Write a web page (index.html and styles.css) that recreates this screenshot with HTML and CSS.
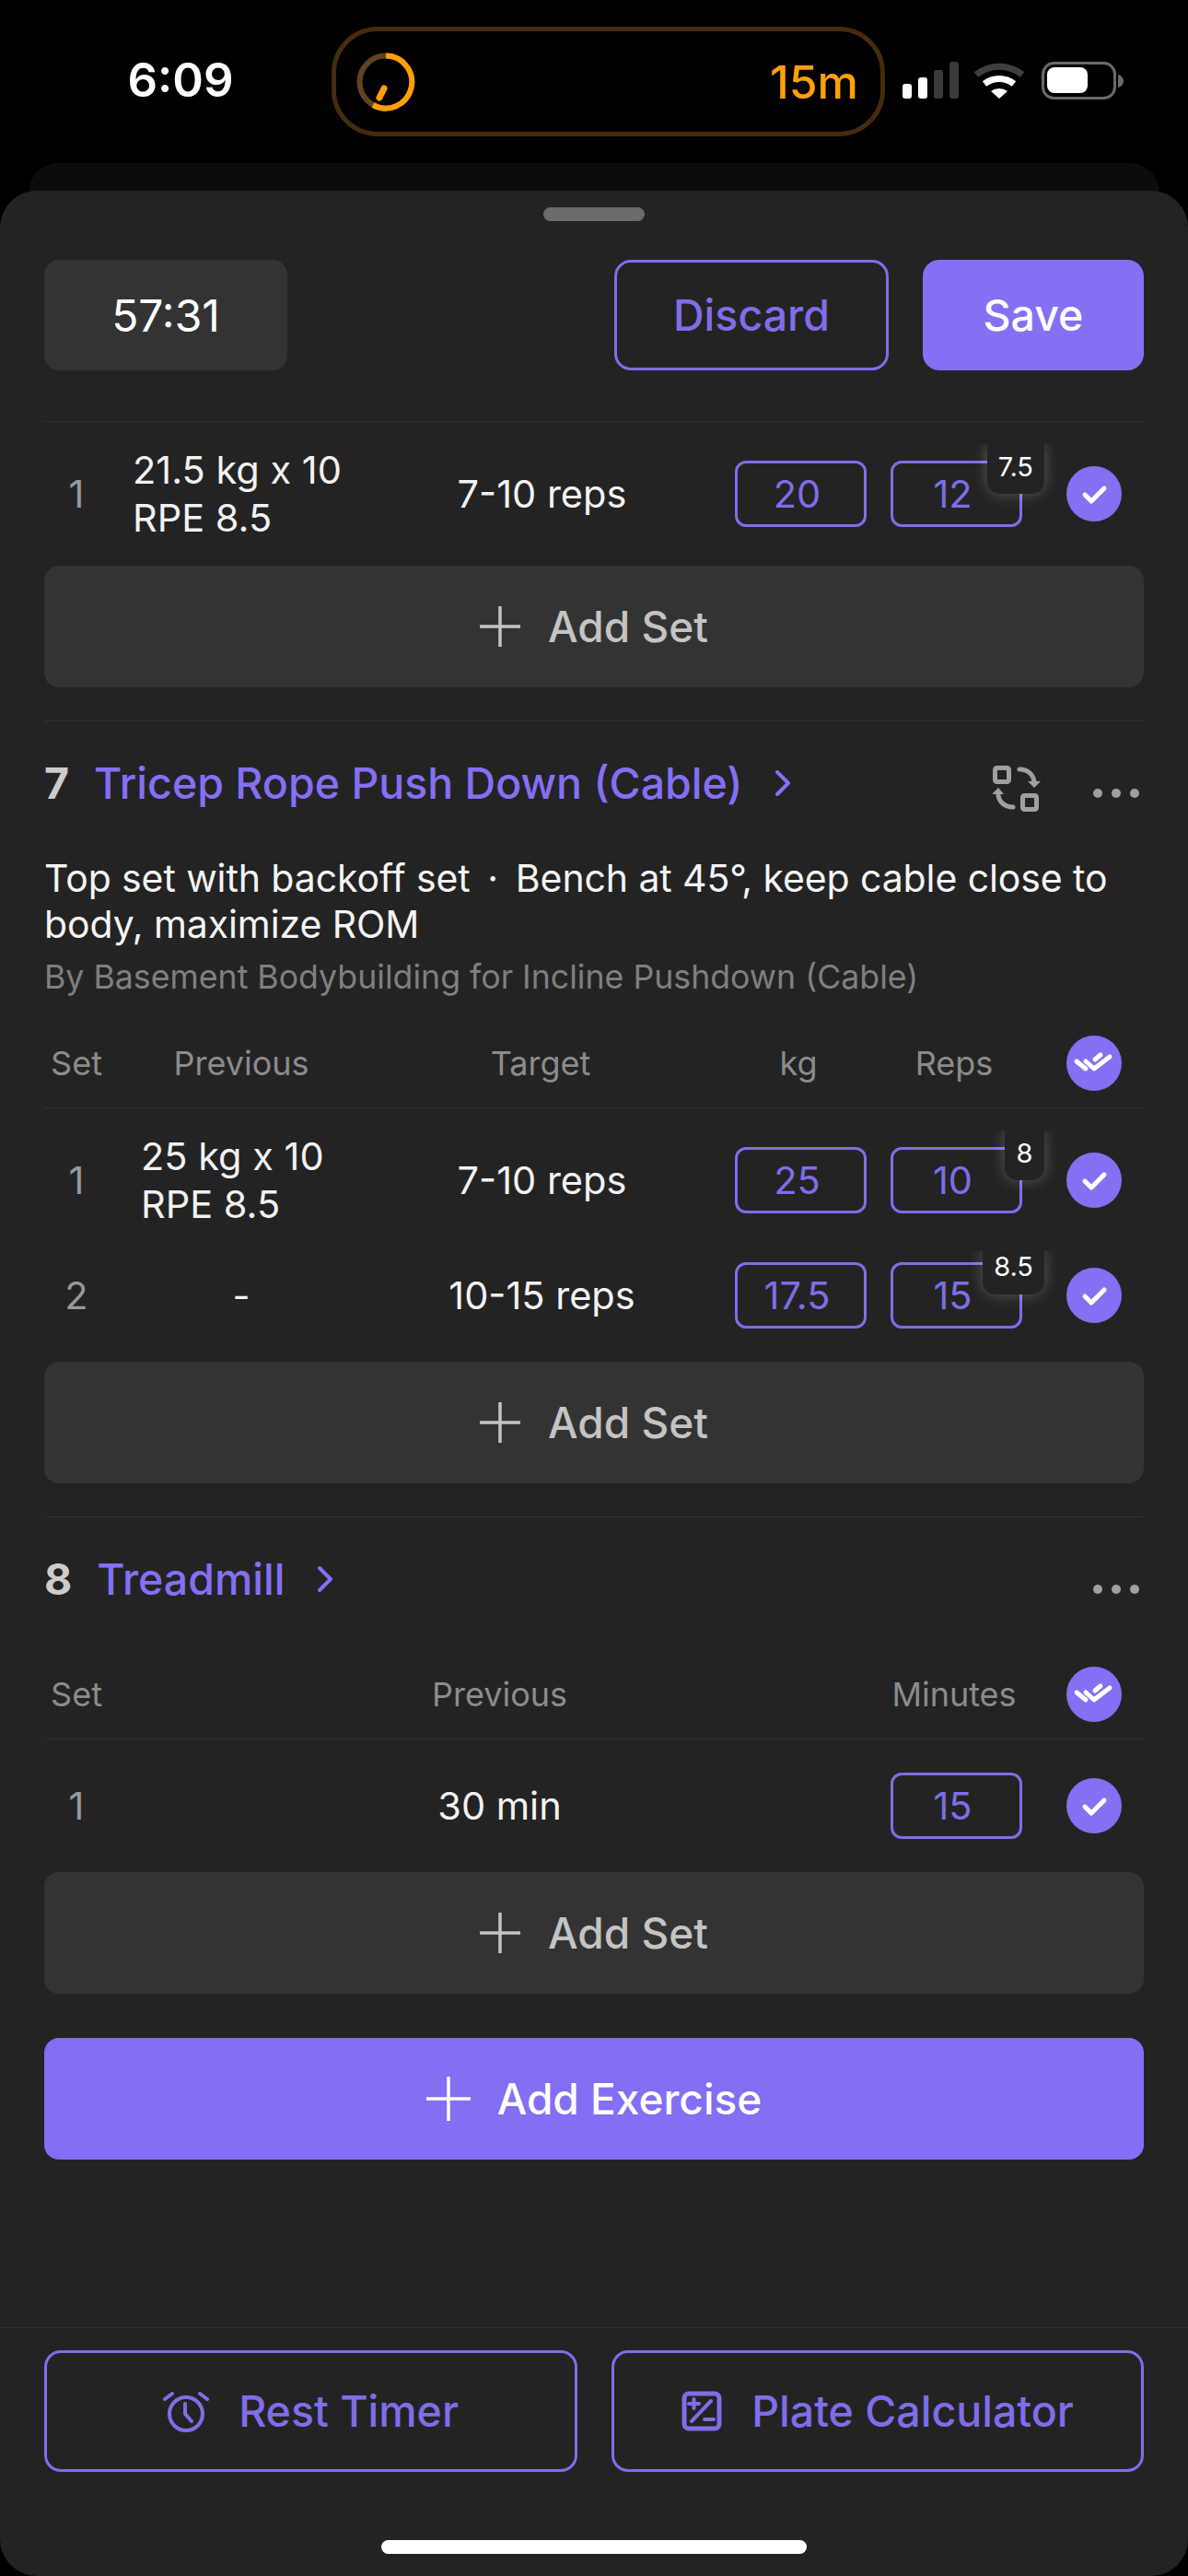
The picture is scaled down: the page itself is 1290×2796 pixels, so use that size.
FILE: index.html
```html
<!DOCTYPE html>
<html lang="en">
<head>
  <meta charset="UTF-8">
  <title>Workout</title>
  <link rel="stylesheet" href="styles.css">
</head>
<body>

  <div class="status">
    <div class="time">6:09</div>
    <div class="island">
      <svg class="ring" width="66" height="66" viewBox="0 0 66 66" fill="none">
        <circle cx="33" cy="33" r="28.5" stroke="#5f4320" stroke-width="6"/>
        <path d="M33 4.500A28.500 28.500 0 1 1 19 58" stroke="#ffa00a" stroke-width="6"/>
        <path d="M26 50l5-10" stroke="#ffa00a" stroke-width="7" stroke-linecap="round"/>
      </svg>
      <span class="island-text">15m</span>
    </div>
    <svg class="status-icons" width="240" height="42" viewBox="0 0 240 42" fill="none">
      <rect x="0" y="24" width="10" height="16" rx="3" fill="#fff"/>
      <rect x="17" y="17" width="10" height="23" rx="3" fill="#fff"/>
      <rect x="34" y="9" width="10" height="31" rx="3" fill="#3a3a3a"/>
      <rect x="51" y="0" width="10" height="40" rx="3" fill="#3a3a3a"/>
      <path d="M80 14a40 40 0 0 1 50 0" stroke="#3f3f3f" stroke-width="7"/>
      <path d="M89 24a26 26 0 0 1 32 0" stroke="#fff" stroke-width="7"/>
      <path d="M96 32a15 15 0 0 1 18 0L105 40z" fill="#fff"/>
      <rect x="152.500" y="1.500" width="78" height="38" rx="12" stroke="#6a6a6a" stroke-width="3"/>
      <rect x="157" y="6" width="44" height="28" rx="8" fill="#fff"/>
      <path d="M234 14c4 1 6 4 6 7s-2 6-6 7z" fill="#6a6a6a"/>
    </svg>
  </div>

  <div class="back-card"></div>

  <div class="sheet">
    <div class="handle"></div>

    <div class="top-row">
      <div class="timer">57:31</div>
      <button class="btn-outline discard">Discard</button>
      <button class="btn-solid save">Save</button>
    </div>

    <div class="sets first">
      <div class="set-row">
        <div class="num">1</div>
        <div class="prev">21.5 kg x 10<br>RPE 8.5</div>
        <div class="target">7-10 reps</div>
        <div class="field">20</div>
        <div class="field">12<span class="rpe">7.5</span></div>
        <div class="check"><svg width="60" height="60" viewBox="0 0 60 60" fill="none"><path d="M20 31l7 7 14-14" stroke="#fff" stroke-width="5" stroke-linecap="round" stroke-linejoin="round"/></svg></div>
      </div>
    </div>
    <button class="add-set"><svg width="44" height="44" viewBox="0 0 44 44" fill="none"><path d="M22 0v44M0 22h44" stroke="#c4c4c4" stroke-width="3.500"/></svg>Add Set</button>

    <div class="exercise">
      <div class="ex-title">
        <span class="ex-num">7</span>
        <span class="ex-name">Tricep Rope Push Down (Cable)</span>
        <svg class="chevron" width="22" height="30" viewBox="0 0 22 30" fill="none"><path d="M5 3l12 12L5 27" stroke="#8470f5" stroke-width="4" stroke-linecap="round" stroke-linejoin="round"/></svg>
        <svg class="swap" width="52" height="50" viewBox="0 0 52 50" fill="none">
          <rect x="2.500" y="2.500" width="15" height="15" rx="2" stroke="#a0a0a0" stroke-width="5"/>
          <rect x="32.500" y="32.500" width="15" height="15" rx="2" stroke="#a0a0a0" stroke-width="5"/>
          <path d="M29 4c10 0 16 7 16 15" stroke="#a0a0a0" stroke-width="5" stroke-linecap="round"/>
          <path d="M38 17h14l-7 7z" fill="#a0a0a0"/>
          <path d="M22 45c-10 0-16-7-16-14" stroke="#a0a0a0" stroke-width="5" stroke-linecap="round"/>
          <path d="M-1 31h13l-6-7z" fill="#a0a0a0"/>
        </svg>
        <svg class="dots" width="50" height="10" viewBox="0 0 50 10"><circle cx="5" cy="5" r="5" fill="#a0a0a0"/><circle cx="25" cy="5" r="5" fill="#a0a0a0"/><circle cx="45" cy="5" r="5" fill="#a0a0a0"/></svg>
      </div>
      <p class="notes">Top set with backoff set &#8201;·&#8201; Bench at 45°, keep cable close to body, maximize ROM</p>
      <p class="credit">By Basement Bodybuilding for Incline Pushdown (Cable)</p>

      <div class="set-head">
        <div class="num">Set</div>
        <div class="head-prev">Previous</div>
        <div class="head-target">Target</div>
        <div class="head-col">kg</div>
        <div class="head-col">Reps</div>
        <div class="check"><svg width="60" height="60" viewBox="0 0 60 60" fill="none"><path d="M11 28l10 8M21 28l9 8 17-13M31 26l6-5" stroke="#fff" stroke-width="5" stroke-linecap="round" stroke-linejoin="round"/></svg></div>
      </div>
      <div class="sets">
        <div class="set-row">
          <div class="num">1</div>
          <div class="prev prev-short">25 kg x 10<br>RPE 8.5</div>
          <div class="target">7-10 reps</div>
          <div class="field">25</div>
          <div class="field">10<span class="rpe">8</span></div>
          <div class="check"><svg width="60" height="60" viewBox="0 0 60 60" fill="none"><path d="M20 31l7 7 14-14" stroke="#fff" stroke-width="5" stroke-linecap="round" stroke-linejoin="round"/></svg></div>
        </div>
        <div class="set-row">
          <div class="num">2</div>
          <div class="prev prev-empty">-</div>
          <div class="target">10-15 reps</div>
          <div class="field">17.5</div>
          <div class="field">15<span class="rpe rpe-short">8.5</span></div>
          <div class="check"><svg width="60" height="60" viewBox="0 0 60 60" fill="none"><path d="M20 31l7 7 14-14" stroke="#fff" stroke-width="5" stroke-linecap="round" stroke-linejoin="round"/></svg></div>
        </div>
      </div>
      <button class="add-set"><svg width="44" height="44" viewBox="0 0 44 44" fill="none"><path d="M22 0v44M0 22h44" stroke="#c4c4c4" stroke-width="3.500"/></svg>Add Set</button>
    </div>

    <div class="exercise">
      <div class="ex-title">
        <span class="ex-num">8</span>
        <span class="ex-name">Treadmill</span>
        <svg class="chevron" width="22" height="30" viewBox="0 0 22 30" fill="none"><path d="M5 3l12 12L5 27" stroke="#8470f5" stroke-width="4" stroke-linecap="round" stroke-linejoin="round"/></svg>
        <svg class="dots push" width="50" height="10" viewBox="0 0 50 10"><circle cx="5" cy="5" r="5" fill="#a0a0a0"/><circle cx="25" cy="5" r="5" fill="#a0a0a0"/><circle cx="45" cy="5" r="5" fill="#a0a0a0"/></svg>
      </div>

      <div class="set-head cardio">
        <div class="num">Set</div>
        <div class="head-prev">Previous</div>
        <div class="head-col">Minutes</div>
        <div class="check"><svg width="60" height="60" viewBox="0 0 60 60" fill="none"><path d="M11 28l10 8M21 28l9 8 17-13M31 26l6-5" stroke="#fff" stroke-width="5" stroke-linecap="round" stroke-linejoin="round"/></svg></div>
      </div>
      <div class="sets">
        <div class="set-row cardio">
          <div class="num">1</div>
          <div class="prev prev-empty">30 min</div>
          <div class="field">15</div>
          <div class="check"><svg width="60" height="60" viewBox="0 0 60 60" fill="none"><path d="M20 31l7 7 14-14" stroke="#fff" stroke-width="5" stroke-linecap="round" stroke-linejoin="round"/></svg></div>
        </div>
      </div>
      <button class="add-set"><svg width="44" height="44" viewBox="0 0 44 44" fill="none"><path d="M22 0v44M0 22h44" stroke="#c4c4c4" stroke-width="3.500"/></svg>Add Set</button>
    </div>

    <button class="add-exercise"><svg width="48" height="48" viewBox="0 0 48 48" fill="none"><path d="M24 0v48M0 24h48" stroke="#fff" stroke-width="3.500"/></svg>Add Exercise</button>

    <div class="footer">
      <button class="btn-outline tool">
        <svg width="50" height="46" viewBox="0 0 50 46" fill="none">
          <circle cx="25" cy="26" r="18" stroke="#7f6ee8" stroke-width="4"/>
          <path d="M24 15v11l7 8" stroke="#7f6ee8" stroke-width="4" stroke-linecap="round" stroke-linejoin="round"/>
          <path d="M2 10l8-6M40 4l8 6" stroke="#7f6ee8" stroke-width="4" stroke-linecap="round"/>
        </svg>
        Rest Timer
      </button>
      <button class="btn-outline tool">
        <svg width="44" height="44" viewBox="0 0 44 44" fill="none">
          <rect x="3" y="3" width="38" height="38" rx="5" stroke="#7f6ee8" stroke-width="5"/>
          <path d="M11 33L32 11" stroke="#7f6ee8" stroke-width="4" stroke-linecap="round"/>
          <path d="M8 14h11M13.500 9v10M25 31h10" stroke="#7f6ee8" stroke-width="4" stroke-linecap="round"/>
        </svg>
        Plate Calculator
      </button>
    </div>

    <div class="home-bar"></div>
  </div>

</body>
</html>
```

FILE: styles.css
```css
* {
  box-sizing: border-box;
}
body {
  margin: 0;
  width: 1290px;
  height: 2796px;
  overflow: hidden;
  background: #000;
  font-family: Inter, "Liberation Sans", sans-serif;
  color: #f2f2f2;
}
button {
  font-family: inherit;
  cursor: pointer;
}
p {
  margin: 0;
}

/* status bar */
.status {
  display: flex;
  align-items: flex-start;
  height: 177px;
  padding-top: 29px;
}
.time {
  width: 360px;
  padding-top: 28px;
  padding-left: 32px;
  text-align: center;
  font-size: 51px;
  line-height: 60px;
  font-weight: 600;
  color: #fff;
}
.island {
  display: flex;
  align-items: center;
  justify-content: space-between;
  width: 601px;
  height: 119px;
  padding: 0 24px 0 21px;
  border: 5px solid #462c0c;
  border-radius: 50px;
}
.island-text {
  font-size: 50px;
  font-weight: 500;
  color: #ffa00a;
}
.status-icons {
  margin: 38px 0 0 19px;
}
.back-card {
  height: 60px;
  margin: 0 31px -30px;
  background: #0c0c0c;
  border-radius: 32px 32px 0 0;
}

/* sheet */
.sheet {
  position: relative;
  display: flex;
  flex-direction: column;
  height: 2589px;
  padding: 18px 48px 24px;
  background: #232323;
  border-radius: 40px;
}
.handle {
  align-self: center;
  width: 110px;
  height: 15px;
  background: #6b6b6b;
  border-radius: 8px;
}
.top-row {
  display: flex;
  align-items: stretch;
  height: 120px;
  margin-top: 42px;
  gap: 37px;
}
.timer {
  display: flex;
  align-items: center;
  justify-content: center;
  width: 264px;
  margin-right: auto;
  background: #333;
  border-radius: 16px;
  font-size: 48px;
  color: #fff;
}
.btn-outline {
  background: none;
  border: 3px solid #7f6ee8;
  border-radius: 18px;
  color: #7f6ee8;
  font-weight: 500;
}
.btn-solid {
  background: #8570f4;
  border: none;
  border-radius: 18px;
  color: #fff;
  font-weight: 500;
}
.discard {
  width: 298px;
  font-size: 46.5px;
}
.save {
  width: 240px;
  font-size: 46.5px;
}

/* set rows */
.sets {
  display: flex;
  flex-direction: column;
  gap: 27px;
  padding: 26px 0;
}
.sets.first {
  margin-top: 55px;
  border-top: 1px solid #303030;
}
.set-row,
.set-head {
  display: grid;
  grid-template-columns: 70px 232px 370px 143px 143px 82px;
  column-gap: 26px;
  align-items: center;
}
.set-row {
  min-height: 92px;
  font-size: 41.5px;
}
.set-row.cardio,
.set-head.cardio {
  grid-template-columns: 70px 797px 143px 82px;
}
.num {
  text-align: center;
  color: #999;
}
.prev {
  line-height: 52px;
}
.prev-short {
  padding-left: 9px;
}
.prev-empty {
  padding-left: 4px;
  text-align: center;
}
.cardio .prev-empty,
.cardio .head-prev {
  padding-left: 0;
}
.target {
  padding-left: 3px;
  text-align: center;
}
.field {
  position: relative;
  display: flex;
  align-items: center;
  justify-content: center;
  height: 72px;
  padding-right: 8px;
  border: 3px solid #7f6ee8;
  border-radius: 12px;
  color: #7f6ee8;
}
.rpe {
  position: absolute;
  top: -21px;
  right: -27px;
  display: flex;
  align-items: center;
  justify-content: center;
  min-width: 43px;
  height: 54px;
  padding: 0 12px 6px;
  background: #232323;
  border-radius: 0 0 14px 14px;
  box-shadow: 0 0 16px rgba(255, 255, 255, .25);
  clip-path: inset(0 -30px -30px -30px);
  font-size: 29px;
  color: #fff;
}
.rpe-short {
  top: -16px;
  height: 48px;
  padding-bottom: 14px;
}
.check {
  justify-self: end;
  width: 60px;
  height: 60px;
  background: #8570f4;
  border-radius: 50%;
}
.check svg {
  display: block;
}
.add-set,
.add-exercise {
  display: flex;
  align-items: center;
  justify-content: center;
  flex-shrink: 0;
  width: 100%;
  height: 132px;
  border: none;
  border-radius: 16px;
  font-size: 46px;
  font-weight: 500;
}
.add-set {
  gap: 30px;
  background: #333;
  color: #c4c4c4;
}
.add-exercise {
  gap: 29px;
  margin-top: 48px;
  background: #846ef3;
  color: #fff;
}

/* exercise block */
.exercise {
  margin-top: 36px;
  padding-top: 37px;
  border-top: 1px solid #303030;
}
.ex-title {
  display: flex;
  align-items: center;
  height: 60px;
  font-size: 46.5px;
  font-weight: 500;
}
.ex-num {
  margin-right: 27px;
  font-weight: 700;
  color: #ccc;
}
.ex-name {
  color: #8470f5;
}
.chevron {
  margin-left: 33px;
}
.swap {
  margin-left: auto;
  margin-top: 12px;
}
.dots {
  margin-left: 57px;
  margin-right: 5px;
  margin-top: 22px;
}
.dots.push {
  margin-left: auto;
}
.notes {
  margin-top: 48px;
  font-size: 41px;
  letter-spacing: -.1px;
  line-height: 50px;
  color: #f4f4f4;
}
.credit {
  margin-top: 10px;
  font-size: 35.7px;
  line-height: 44px;
  color: #808080;
}
.set-head {
  margin-top: 42px;
  padding-bottom: 18px;
  border-bottom: 1px solid #303030;
  font-size: 36px;
  color: #8c8c8c;
}
.set-head.cardio {
  margin-top: 65px;
}
.set-head .num {
  color: #8c8c8c;
}
.head-prev {
  padding-left: 4px;
  text-align: center;
}
.head-target {
  text-align: center;
}
.head-col {
  padding-right: 5px;
  text-align: center;
}

/* footer */
.footer {
  display: grid;
  grid-template-columns: 579px 578px;
  column-gap: 37px;
  margin: auto -48px 0;
  padding: 24px 48px 0;
  border-top: 1px solid #303030;
}
.tool {
  display: flex;
  align-items: center;
  justify-content: center;
  gap: 32px;
  height: 132px;
  font-size: 46.5px;
}
.home-bar {
  align-self: center;
  flex-shrink: 0;
  width: 462px;
  height: 15px;
  margin-top: 74px;
  background: #fff;
  border-radius: 8px;
}
```
